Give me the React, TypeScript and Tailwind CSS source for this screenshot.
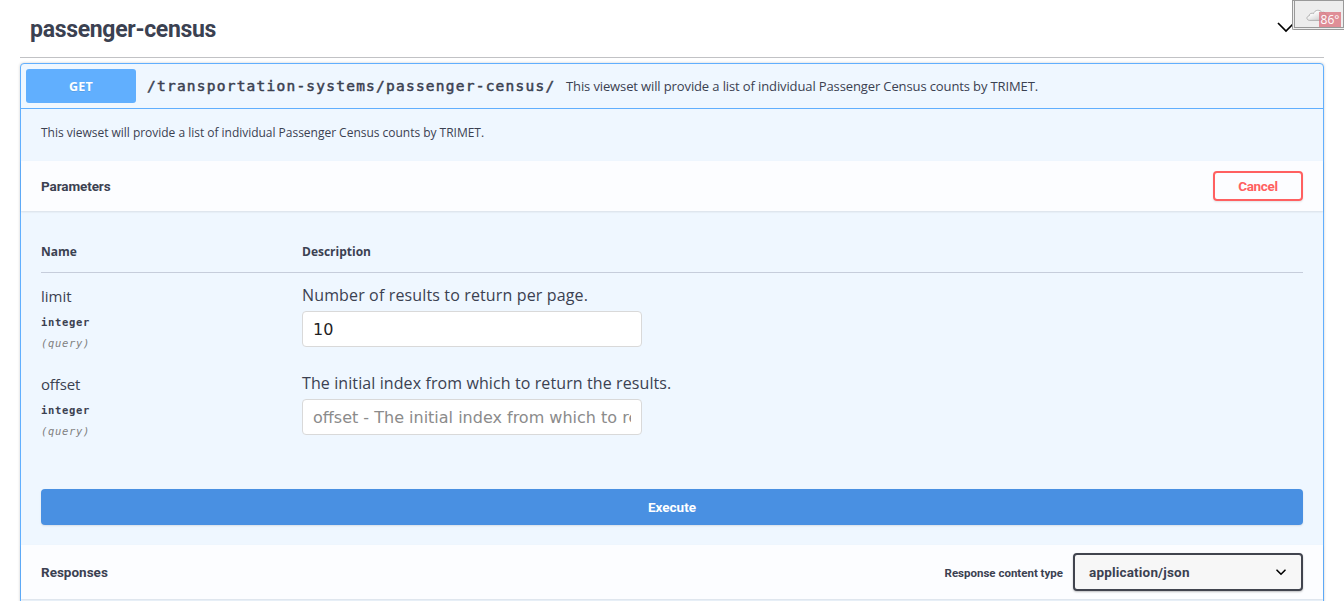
type ParameterProps = {
  name: string;
  description: string;
  value?: string;
  placeholder?: string;
  nameTracking: string;
  tracking: string;
};

function Parameter({ name, description, value, placeholder, nameTracking, tracking }: ParameterProps) {
  return (
    <div className="flex h-[88px]">
      <div className="w-[261px] pt-[12px]">
        <div className={`text-[15px] leading-[22px] ${nameTracking}`}>{name}</div>
        <div className="pt-[7px] font-['DejaVu_Sans_Mono',monospace] text-[10.5px] leading-[16px] font-bold tracking-[0.68px]">
          integer
        </div>
        <div className="pt-[5px] font-['DejaVu_Sans_Mono',monospace] text-[10.5px] leading-[16px] tracking-[0.68px] text-[#808080] italic">
          (query)
        </div>
      </div>
      <div className="pt-[10px]">
        <div className={`text-[16px] leading-[24px] ${tracking}`}>{description}</div>
        <input
          className="mt-[4px] block h-[36px] w-[340px] rounded-[4px] border border-[#d9d9d9] bg-white px-[10px] font-['DejaVu_Sans',sans-serif] text-[16px] text-[#1f1f1f] outline-none placeholder:text-[#8b8b8b]"
          defaultValue={value}
          placeholder={placeholder}
        />
      </div>
    </div>
  );
}

function WeatherBadge() {
  return (
    <div className="absolute top-0 right-0 h-[30px] w-[52px] rounded-bl-[2px] border border-r-0 border-[#999] bg-[#eee] pb-px pl-px">
      <div className="h-full w-full border border-t-0 border-[#999] bg-[#ededed]">
        <svg className="absolute top-[8px] left-[13px]" width="24" height="13" viewBox="0 0 24 13">
          <defs>
            <linearGradient id="cloud" x1="0" y1="0" x2="1" y2="1">
              <stop offset="0.3" stopColor="#fafafa" />
              <stop offset="1" stopColor="#bcbcbc" />
            </linearGradient>
          </defs>
          <path
            d="M3.5 11.4 C0 11 .3 7.2 3.2 6.9 C3 4.5 6 3.6 7.6 4.6 C8.4 .6 14.4 .2 16 3.6 C18.4 2.4 20.2 4.4 19.8 6 C24 6.4 23.8 11.2 20 11.4 Z"
            fill="url(#cloud)"
            stroke="#a4a4a4"
            strokeWidth="0.8"
          />
        </svg>
        <span className="absolute top-[11px] left-[26px] h-[15px] w-[22px] bg-[#db7681]/80 text-center font-['Open_Sans',sans-serif] text-[12px] leading-[16px] text-white">
          86°
        </span>
      </div>
    </div>
  );
}

export default function App() {
  return (
    <div className="relative h-[601px] overflow-hidden bg-white px-5 font-['Open_Sans',sans-serif] text-[#3b4151]">
      <header className="flex h-[58px] items-center justify-between border-b border-[#c1c2c5] pr-[29px] pl-[10px]">
        <h1 className="pt-[2px] font-['Roboto',sans-serif] text-[23px] leading-[30px] font-bold tracking-[-0.31px]">
          passenger-census
        </h1>
        <svg width="18" height="12" viewBox="0 0 18 12" className="-mt-[4px]">
          <path d="M1 2 L9 10 L17 2" fill="none" stroke="#000" strokeWidth="1.7" />
        </svg>
      </header>

      <main className="mt-[5px] h-[620px] rounded-[4px] border border-[#61affe] bg-[#eff7ff] shadow-[0_0_3px_rgba(0,0,0,0.19)]">
        <div className="flex h-[45px] items-center border-b border-[#61affe] px-[5px]">
          <div className="flex h-[34px] w-[110px] items-center justify-center rounded-[3px] bg-[#61affe] pt-[2px] text-[12.5px] font-bold tracking-[0.2px] text-white [text-shadow:0_1px_0_rgba(0,0,0,0.1)]">
            GET
          </div>
          <div className="w-[430px] pt-[2px] pl-[11px] font-['DejaVu_Sans_Mono',monospace] text-[14.5px] tracking-[1.23px] whitespace-nowrap [-webkit-text-stroke:0.5px_#3b4151]">
            /transportation-systems/passenger-census/
          </div>
          <div className="pt-[2px] text-[13px] tracking-[-0.12px] whitespace-nowrap">
            This viewset will provide a list of individual Passenger Census counts by TRIMET.
          </div>
        </div>

        <div className="flex h-[52px] items-center px-5 pb-[4px] text-[12px] tracking-[-0.02px]">
          This viewset will provide a list of individual Passenger Census counts by TRIMET.
        </div>

        <div className="flex h-[50px] items-center justify-between bg-white/80 px-5 font-['Roboto',sans-serif] text-[13.5px] font-bold shadow-[0_1px_2px_rgba(0,0,0,0.1)]">
          <h2 className="tracking-[-0.1px]">Parameters</h2>
          <button className="h-[30px] w-[90px] rounded-[4px] border-2 border-[#ff6060] tracking-[-0.3px] text-[#ff6060] shadow-[0_1px_2px_rgba(0,0,0,0.1)]">
            Cancel
          </button>
        </div>

        <section className="h-[278px] px-5 pt-[31px]">
          <div className="flex h-[31px] border-b border-[#c6cddb] text-[12px] leading-[20px] font-bold">
            <div className="w-[261px]">Name</div>
            <div>Description</div>
          </div>
          <Parameter
            name="limit"
            description="Number of results to return per page."
            value="10"
            nameTracking="tracking-[0px]"
            tracking="tracking-[0.14px]"
          />
          <Parameter
            name="offset"
            description="The initial index from which to return the results."
            placeholder="offset - The initial index from which to return the results."
            nameTracking="tracking-[-0.15px]"
            tracking="tracking-[0.1px]"
          />
        </section>

        <div className="h-[56px] px-5">
          <button className="h-[36px] w-full rounded-[4px] bg-[#4990e2] font-['Roboto',sans-serif] text-[13.5px] font-bold text-white shadow-[0_1px_2px_rgba(0,0,0,0.1)]">
            Execute
          </button>
        </div>

        <div className="flex h-[54px] items-center bg-white/80 px-5 font-['Roboto',sans-serif] font-bold shadow-[0_1px_2px_rgba(0,0,0,0.1)]">
          <h2 className="flex-1 text-[13.5px] tracking-[0px]">Responses</h2>
          <span className="mr-[10px] pt-[3px] text-[11.5px]">Response content type</span>
          <div className="flex h-[38px] w-[230px] items-center justify-between rounded-[4px] border-2 border-[#41444e] bg-[#f7f7f7] pr-[15px] pl-[14px] shadow-[0_1px_2px_rgba(0,0,0,0.25)]">
            <span className="text-[13.5px] tracking-[0.18px]">application/json</span>
            <svg width="10" height="7" viewBox="0 0 10 7">
              <path
                d="M1 1.2 L5 5.2 L9 1.2"
                fill="none"
                stroke="#000"
                strokeWidth="1.6"
                strokeLinecap="round"
              />
            </svg>
          </div>
        </div>
      </main>

      <WeatherBadge />
    </div>
  );
}
